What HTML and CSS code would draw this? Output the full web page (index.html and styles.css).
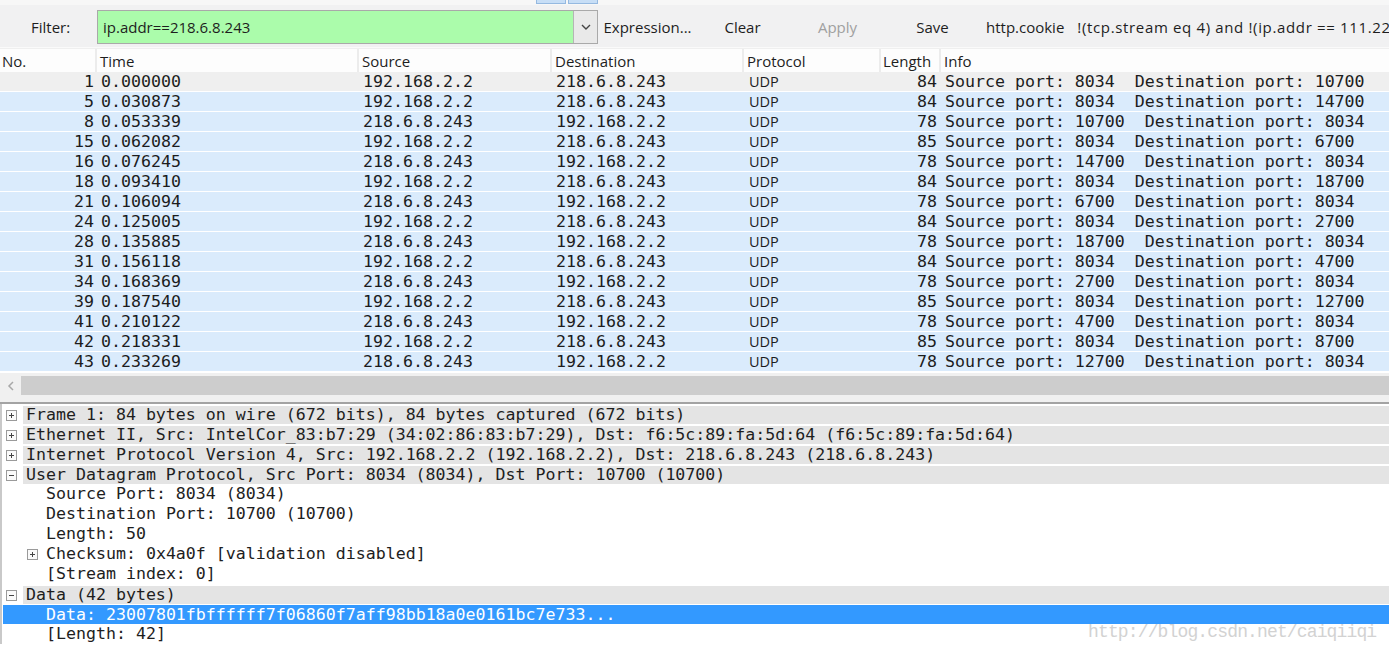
FILE: index.html
```html
<!DOCTYPE html>
<html>
<head>
<meta charset="utf-8">
<link rel="stylesheet" href="styles.css">
</head>
<body>
<div class="app">
  <div class="topstrip"><span class="tab"></span><span class="tab"></span></div>
  <div class="toolbar">
    <span class="flabel">Filter:</span>
    <div class="finput">
      <span class="ftext">ip.addr==218.6.8.243</span>
      <span class="fdrop"><svg width="10" height="6" viewBox="0 0 10 6"><path d="M1 1 L5 5 L9 1" fill="none" stroke="#444" stroke-width="1.4"/></svg></span>
    </div>
    <span class="btn">Expression...</span>
    <span class="btn">Clear</span>
    <span class="btn disabled">Apply</span>
    <span class="btn">Save</span>
    <span class="saved">http.cookie</span>
    <span class="saved long">!(tcp.stream eq 4) and !(ip.addr == 111.22</span>
  </div>

  <div class="plist">
    <div class="phead">
      <span class="h">No.</span><span class="h">Time</span><span class="h">Source</span><span class="h">Destination</span><span class="h">Protocol</span><span class="h">Length</span><span class="h last">Info</span>
    </div>
    <div class="prow first"><span class="c no">1</span><span class="c">0.000000</span><span class="c">192.168.2.2</span><span class="c">218.6.8.243</span><span class="c proto">UDP</span><span class="c len">84</span><span class="c info">Source port: 8034  Destination port: 10700</span></div>
    <div class="prow"><span class="c no">5</span><span class="c">0.030873</span><span class="c">192.168.2.2</span><span class="c">218.6.8.243</span><span class="c proto">UDP</span><span class="c len">84</span><span class="c info">Source port: 8034  Destination port: 14700</span></div>
    <div class="prow"><span class="c no">8</span><span class="c">0.053339</span><span class="c">218.6.8.243</span><span class="c">192.168.2.2</span><span class="c proto">UDP</span><span class="c len">78</span><span class="c info">Source port: 10700  Destination port: 8034</span></div>
    <div class="prow"><span class="c no">15</span><span class="c">0.062082</span><span class="c">192.168.2.2</span><span class="c">218.6.8.243</span><span class="c proto">UDP</span><span class="c len">85</span><span class="c info">Source port: 8034  Destination port: 6700</span></div>
    <div class="prow"><span class="c no">16</span><span class="c">0.076245</span><span class="c">218.6.8.243</span><span class="c">192.168.2.2</span><span class="c proto">UDP</span><span class="c len">78</span><span class="c info">Source port: 14700  Destination port: 8034</span></div>
    <div class="prow"><span class="c no">18</span><span class="c">0.093410</span><span class="c">192.168.2.2</span><span class="c">218.6.8.243</span><span class="c proto">UDP</span><span class="c len">84</span><span class="c info">Source port: 8034  Destination port: 18700</span></div>
    <div class="prow"><span class="c no">21</span><span class="c">0.106094</span><span class="c">218.6.8.243</span><span class="c">192.168.2.2</span><span class="c proto">UDP</span><span class="c len">78</span><span class="c info">Source port: 6700  Destination port: 8034</span></div>
    <div class="prow"><span class="c no">24</span><span class="c">0.125005</span><span class="c">192.168.2.2</span><span class="c">218.6.8.243</span><span class="c proto">UDP</span><span class="c len">84</span><span class="c info">Source port: 8034  Destination port: 2700</span></div>
    <div class="prow"><span class="c no">28</span><span class="c">0.135885</span><span class="c">218.6.8.243</span><span class="c">192.168.2.2</span><span class="c proto">UDP</span><span class="c len">78</span><span class="c info">Source port: 18700  Destination port: 8034</span></div>
    <div class="prow"><span class="c no">31</span><span class="c">0.156118</span><span class="c">192.168.2.2</span><span class="c">218.6.8.243</span><span class="c proto">UDP</span><span class="c len">84</span><span class="c info">Source port: 8034  Destination port: 4700</span></div>
    <div class="prow"><span class="c no">34</span><span class="c">0.168369</span><span class="c">218.6.8.243</span><span class="c">192.168.2.2</span><span class="c proto">UDP</span><span class="c len">78</span><span class="c info">Source port: 2700  Destination port: 8034</span></div>
    <div class="prow"><span class="c no">39</span><span class="c">0.187540</span><span class="c">192.168.2.2</span><span class="c">218.6.8.243</span><span class="c proto">UDP</span><span class="c len">85</span><span class="c info">Source port: 8034  Destination port: 12700</span></div>
    <div class="prow"><span class="c no">41</span><span class="c">0.210122</span><span class="c">218.6.8.243</span><span class="c">192.168.2.2</span><span class="c proto">UDP</span><span class="c len">78</span><span class="c info">Source port: 4700  Destination port: 8034</span></div>
    <div class="prow"><span class="c no">42</span><span class="c">0.218331</span><span class="c">192.168.2.2</span><span class="c">218.6.8.243</span><span class="c proto">UDP</span><span class="c len">85</span><span class="c info">Source port: 8034  Destination port: 8700</span></div>
    <div class="prow"><span class="c no">43</span><span class="c">0.233269</span><span class="c">218.6.8.243</span><span class="c">192.168.2.2</span><span class="c proto">UDP</span><span class="c len">78</span><span class="c info">Source port: 12700  Destination port: 8034</span></div>
  </div>

  <div class="hscroll">
    <span class="sbtn"><svg width="8" height="10" viewBox="0 0 8 10"><path d="M6 1 L2 5 L6 9" fill="none" stroke="#a8a8a8" stroke-width="1.5"/></svg></span>
    <span class="thumb"></span>
  </div>
  <div class="splitter"></div>

  <div class="details">
    <div class="drow top"><span class="exp"><svg width="11" height="11" viewBox="0 0 11 11"><rect x="0.5" y="0.5" width="10" height="10" fill="#fafafa" stroke="#9a9a9a"/><path d="M3 5.5 H8 M5.5 3 V8" stroke="#444" stroke-width="1"/></svg></span><span class="dtext">Frame 1: 84 bytes on wire (672 bits), 84 bytes captured (672 bits)</span></div>
    <div class="drow top"><span class="exp"><svg width="11" height="11" viewBox="0 0 11 11"><rect x="0.5" y="0.5" width="10" height="10" fill="#fafafa" stroke="#9a9a9a"/><path d="M3 5.5 H8 M5.5 3 V8" stroke="#444" stroke-width="1"/></svg></span><span class="dtext">Ethernet II, Src: IntelCor_83:b7:29 (34:02:86:83:b7:29), Dst: f6:5c:89:fa:5d:64 (f6:5c:89:fa:5d:64)</span></div>
    <div class="drow top"><span class="exp"><svg width="11" height="11" viewBox="0 0 11 11"><rect x="0.5" y="0.5" width="10" height="10" fill="#fafafa" stroke="#9a9a9a"/><path d="M3 5.5 H8 M5.5 3 V8" stroke="#444" stroke-width="1"/></svg></span><span class="dtext">Internet Protocol Version 4, Src: 192.168.2.2 (192.168.2.2), Dst: 218.6.8.243 (218.6.8.243)</span></div>
    <div class="drow top"><span class="exp"><svg width="11" height="11" viewBox="0 0 11 11"><rect x="0.5" y="0.5" width="10" height="10" fill="#fafafa" stroke="#9a9a9a"/><path d="M3 5.5 H8" stroke="#444" stroke-width="1"/></svg></span><span class="dtext">User Datagram Protocol, Src Port: 8034 (8034), Dst Port: 10700 (10700)</span></div>
    <div class="drow child"><span class="dtext">Source Port: 8034 (8034)</span></div>
    <div class="drow child"><span class="dtext">Destination Port: 10700 (10700)</span></div>
    <div class="drow child"><span class="dtext">Length: 50</span></div>
    <div class="drow child sub"><span class="exp"><svg width="11" height="11" viewBox="0 0 11 11"><rect x="0.5" y="0.5" width="10" height="10" fill="#fafafa" stroke="#9a9a9a"/><path d="M3 5.5 H8 M5.5 3 V8" stroke="#444" stroke-width="1"/></svg></span><span class="dtext">Checksum: 0x4a0f [validation disabled]</span></div>
    <div class="drow child"><span class="dtext">[Stream index: 0]</span></div>
    <div class="drow top"><span class="exp"><svg width="11" height="11" viewBox="0 0 11 11"><rect x="0.5" y="0.5" width="10" height="10" fill="#fafafa" stroke="#9a9a9a"/><path d="M3 5.5 H8" stroke="#444" stroke-width="1"/></svg></span><span class="dtext">Data (42 bytes)</span></div>
    <div class="drow child selected"><span class="dtext">Data: 23007801fbffffff7f06860f7aff98bb18a0e0161bc7e733...</span></div>
    <div class="drow child"><span class="dtext">[Length: 42]</span></div>
  </div>

  <div class="watermark">http://blog.csdn.net/caiqiiqi</div>
</div>
</body>
</html>
```
FILE: styles.css
```css
* { box-sizing: border-box; }
html, body { margin: 0; padding: 0; }
body {
  width: 1389px;
  height: 653px;
  overflow: hidden;
  background: #ffffff;
  font-family: "Open Sans", "Noto Sans", sans-serif;
}
.app { position: relative; width: 1389px; height: 653px; overflow: hidden; }

.topstrip {
  height: 5px;
  background: #f7f7f7;
  display: flex;
  padding-left: 536px;
  gap: 2px;
}
.tab {
  width: 30px;
  height: 4px;
  background: #c7def6;
  border: 1px solid #95b9e0;
  border-top: none;
}

.toolbar {
  height: 43px;
  padding-top: 2px;
  background: #f1f1f2;
  display: flex;
  align-items: center;
  font-size: 15px;
  color: #1e1e1e;
  white-space: nowrap;
  border-bottom: 1px solid #fafafa;
  overflow: hidden;
}
.toolbar > * { flex-shrink: 0; }
.flabel { width: 97px; padding-left: 31px; }
.finput {
  width: 501px;
  height: 34px;
  background: #abfcab;
  border: 1px solid #a9a9a9;
  display: flex;
  align-items: center;
  justify-content: space-between;
}
.ftext { padding-left: 5px; }
.fdrop {
  width: 24px;
  height: 32px;
  background: #e9e9e9;
  border-left: 1px solid #b5b5b5;
  display: flex;
  align-items: center;
  justify-content: center;
}
.btn { width: 95px; text-align: center; }
.finput + .btn { margin-left: 2px; }
.btn.disabled { color: #a0a0a0; }
.saved { padding: 0 6px 0 6px; }
.saved.long { padding-left: 7px; letter-spacing: 0.65px; }

.plist { background: #ffffff; }
.phead, .prow {
  display: grid;
  grid-template-columns: 97px 262px 193px 192px 137px 60px 1fr;
}
.phead {
  height: 24px;
  background: #efefef;
  padding-top: 1px;
}
.h {
  background: #fdfdfd;
  border-right: 2px solid #ececec;
  font-size: 15px;
  line-height: 22px;
  padding-top: 1px;
  padding-left: 2px;
  color: #1e1e1e;
  white-space: nowrap;
}
.h:nth-child(n+2) { padding-left: 3px; }
.h:nth-child(6) { padding-left: 2px; }
.h.last { border-right: none; }

.prow {
  height: 20px;
  background: #daebfc;
  border-bottom: 1px solid #ffffff;
  font-family: "DejaVu Sans Mono", monospace;
  font-size: 16.6px;
  line-height: 19px;
  color: #1c1c1c;
}
.prow.first { background: #efefef; }
.c { padding-left: 4px; white-space: pre; }
.c.info { overflow: hidden; }
.c.no { text-align: right; padding-right: 3px; padding-left: 0; }
.c.len { text-align: right; padding-right: 4px; padding-left: 0; }
.c.proto {
  font-family: "Open Sans", "Noto Sans", sans-serif;
  font-size: 14.5px;
  padding-left: 5px;
}

.hscroll {
  margin-top: 1px;
  height: 23px;
  background: #f0f0f0;
  display: flex;
  align-items: flex-end;
}
.sbtn {
  width: 21px;
  height: 19px;
  display: flex;
  align-items: center;
  justify-content: center;
  margin-bottom: 1px;
}
.thumb {
  flex: 1;
  height: 19px;
  background: #cdcdcd;
  margin-bottom: 1px;
}
.splitter {
  height: 8px;
  background: #f0f0f0;
  border-bottom: 2px solid #a3a3a3;
}

.details {
  border-left: 2px solid #c9c9c9;
  font-family: "DejaVu Sans Mono", monospace;
  font-size: 16.6px;
  color: #1e1e1e;
}
.drow {
  height: 20px;
  display: flex;
  align-items: stretch;
}
.dtext { white-space: pre; }
.drow.top .dtext {
  flex: 1;
  background: #e4e4e4;
  margin-top: 2px;
  line-height: 18px;
  padding-left: 3px;
}
.exp {
  width: 21px;
  display: flex;
  align-items: center;
  padding-left: 4px;
  padding-top: 2px;
}
.drow.child .dtext {
  padding-left: 44px;
  line-height: 20px;
  flex: 1;
}
.drow.sub .exp { width: 44px; padding-left: 25px; padding-top: 0; }
.drow.sub .dtext { padding-left: 0; }
.drow.selected .dtext {
  background: #3399ff;
  color: #ffffff;
  margin-top: 1px;
  line-height: 19px;
  margin-left: 1px;
  padding-left: 43px;
}

.watermark {
  position: absolute;
  left: 1088px;
  top: 622px;
  font-family: "Liberation Mono", "DejaVu Sans Mono", monospace;
  font-size: 18px;
  letter-spacing: -0.86px;
  color: #d2d2d2;
  white-space: nowrap;
}
```
